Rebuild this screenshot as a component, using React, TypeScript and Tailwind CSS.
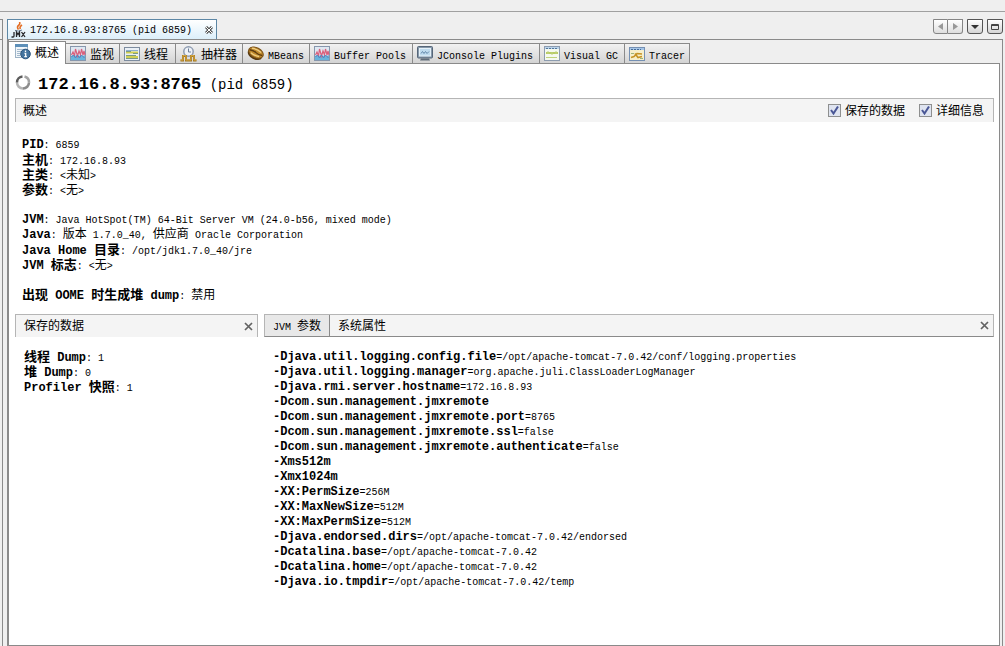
import { useState } from "react";
import type { ReactNode } from "react";

const MONO = "font-['Liberation_Mono','Noto_Sans_CJK_SC',monospace]";
const CJK = /([\u4e00-\u9fff]+)/;

// Chinese runs are set a little larger than the latin ones beside them
const Mixed = ({ text, bold = false }: { text: string; bold?: boolean }) => (
  <>
    {text.split(CJK).map((part, i) =>
      CJK.test(part) ? (
        <span key={i} className={bold ? "text-[13px]" : "text-[12px]"}>
          {part}
        </span>
      ) : (
        part
      )
    )}
  </>
);

const Field = ({ name, value, separator = ": " }: { name: string; value?: string; separator?: string }) => (
  <div className="h-[15px] whitespace-pre">
    <b className="text-[12px]">
      <Mixed text={name} bold />
    </b>
    {value !== undefined && <Mixed text={separator + value} />}
  </div>
);

const InfoIcon = () => (
  <svg width="16" height="16" viewBox="0 0 16 16">
    <rect x="0.5" y="0.5" width="12" height="13" fill="#f1f6fa" stroke="#9db3c6" />
    <rect x="0" y="0" width="13" height="3" fill="#5d8fb8" />
    <path d="M2 5.500h9M2 7.500h4M2 9.500h3M2 11.500h3" stroke="#a3b9cc" />
    <circle cx="10.500" cy="10" r="4.800" fill="#44749f" stroke="#2b547c" />
    <path d="M10.500 6.500v1.500M9.500 9.500h1.200v3M9.300 12.700h2.600" stroke="#fff" strokeWidth="1.300" fill="none" />
  </svg>
);

const MonitorIcon = () => (
  <svg width="16" height="15" viewBox="0 0 16 15">
    <rect x="0.5" y="0.5" width="15" height="14" fill="#dfe8f2" stroke="#8797ad" />
    <path d="M1 14v-4l2-1 2 1 2-1 2 1 2-1 2 1 2-1v5z" fill="#68b4dc" />
    <path d="M1.500 9l1.500-3 1.500 4 1-7 2 7 1.500-5 1.500 4 1-6 1.500 6 1-4 1 4" stroke="#d9607c" strokeWidth="1.200" fill="none" />
    <path d="M1.500 11l2-2 2 3 2-3 2 3 2-3 3 3" stroke="#5582bd" fill="none" />
  </svg>
);

const ThreadsIcon = () => (
  <svg width="16" height="14" viewBox="0 0 16 14">
    <rect x="0.5" y="0.5" width="15" height="13" fill="#eaf0f6" stroke="#7d8c9f" />
    <path d="M2 3.500h12" stroke="#8eaed0" />
    <path d="M2 5.500h12M2 10h12" stroke="#d0cf52" strokeWidth="2" />
    <path d="M2 4.500h5M9 6.500h5M2 8.500h10M2 11.500h12" stroke="#7b9a86" />
  </svg>
);

const SamplerIcon = () => (
  <svg width="17" height="16" viewBox="0 0 17 16" fill="none">
    <circle cx="8.500" cy="5.500" r="4.700" fill="#eef2f7" stroke="#8e9bb0" strokeWidth="1.500" />
    <path d="M8.500 2.500v3.500h2.500" stroke="#6c7f98" />
    <path d="M.500 14.500H3V10h3v4.500h5V10h3v4.500h2.500" stroke="#a67a20" strokeWidth="2" />
    <path d="M.500 14H3V9.500h3V14h5V9.500h3V14h2.500" stroke="#d3a440" />
  </svg>
);

const BeanIcon = () => (
  <svg width="17" height="15" viewBox="0 0 17 15">
    <g transform="rotate(28 8.500 7.500)">
      <ellipse cx="8.500" cy="8.500" rx="7.800" ry="5" fill="#55380f" />
      <ellipse cx="8.500" cy="6.500" rx="7.800" ry="5" fill="#c08a2c" stroke="#7c5218" />
      <path d="M1.500 7q4-1.500 7-.500t7-.500" stroke="#5d3c10" strokeWidth="1.400" fill="none" />
      <path d="M3 4.500q5-2 10-.500M4 9q5 1 9-.500" stroke="#efcf85" strokeWidth="1.300" fill="none" />
    </g>
  </svg>
);

const ConsoleIcon = () => (
  <svg width="16" height="15" viewBox="0 0 16 15">
    <rect x="0.5" y="0.5" width="15" height="11.500" rx="1" fill="#8698aa" stroke="#566678" />
    <rect x="2.500" y="2.500" width="11" height="7.500" fill="#bfdbee" stroke="#e4f0f8" />
    <path d="M4 7.500l1.500-2 1.500 2 1.500-2 1.500 2 2-2" stroke="#6288aa" fill="none" />
    <path d="M4 12.500h8l1 2H3z" fill="#606c79" />
  </svg>
);

const GcIcon = () => (
  <svg width="16" height="15" viewBox="0 0 16 15">
    <rect x="0.5" y="0.5" width="15" height="14" fill="#f5f9ef" stroke="#8d9caf" />
    <path d="M1 2h14" stroke="#b9d3eb" strokeWidth="2" />
    <path d="M2 2.500h12" stroke="#54779b" strokeDasharray="2 1" />
    <path d="M2 7h12" stroke="#a3bd36" strokeWidth="1.500" />
    <path d="M4 5v3M8 6v3M12 5v3M2 11.500h11" stroke="#bfd27c" />
  </svg>
);

const TracerIcon = () => (
  <svg width="16" height="14" viewBox="0 0 16 14">
    <rect x="0.5" y="0.5" width="15" height="13" fill="#f6efcb" stroke="#7590b3" />
    <path d="M1 2h14" stroke="#a6c6e8" strokeWidth="2" />
    <path d="M2 2.500h10" stroke="#466c98" strokeDasharray="2 1" />
    <path d="M2 10.500l3-1 3-3 5 .500M6 6.500l3 4 4-1" stroke="#c59325" strokeWidth="1.600" fill="none" />
    <path d="M2 6.500h3M11 11.500h3" stroke="#9cb37b" />
  </svg>
);

const JmxIcon = () => (
  <svg width="15" height="16" viewBox="0 0 15 16" fill="none">
    <path d="M8.500 0q1 2-1 3.500t0 4M11 3Q8 5 9.500 7" stroke="#e46d22" strokeWidth="1.600" />
    <path d="M4 8.500q4 1.500 7-.500" stroke="#68809a" />
    <path d="M3 10v4q0 1-1 1H.500M5.500 15v-5l1.500 2.500L8.500 10v5M10.500 10l3.500 5M14 10l-3.500 5" stroke="#27282c" strokeWidth="1.300" />
  </svg>
);

const SpinnerIcon = () => (
  <svg width="16" height="17" viewBox="0 0 16 17" fill="none" strokeWidth="2.500">
    <path d="M9.500 2.500A6 6 0 0 1 14 8.500" stroke="#a3a3a3" />
    <path d="M14 8.500A6 6 0 0 1 8 14.500" stroke="#8c8c8c" />
    <path d="M8 14.500A6 6 0 0 1 2 8.500" stroke="#b4b4b4" />
    <path d="M2 8.500A6 6 0 0 1 7.500 2.500" stroke="#5c5c5c" />
  </svg>
);

const CloseIcon = () => (
  <svg width="9" height="9" viewBox="0 0 9 9">
    <path d="M1 1l7 7M8 1L1 8" stroke="#626262" strokeWidth="1.700" />
  </svg>
);

const tabs: { label: string; icon: ReactNode; width: string }[] = [
  { label: "概述", icon: <InfoIcon />, width: "w-[57px]" },
  { label: "监视", icon: <MonitorIcon />, width: "w-[54px]" },
  { label: "线程", icon: <ThreadsIcon />, width: "w-[56px]" },
  { label: "抽样器", icon: <SamplerIcon />, width: "w-[67px]" },
  { label: "MBeans", icon: <BeanIcon />, width: "w-[67px]" },
  { label: "Buffer Pools", icon: <MonitorIcon />, width: "w-[103px]" },
  { label: "JConsole Plugins", icon: <ConsoleIcon />, width: "w-[127px]" },
  { label: "Visual GC", icon: <GcIcon />, width: "w-[85px]" },
  { label: "Tracer", icon: <TracerIcon />, width: "w-[65px]" },
];

const overview: ([string, string] | null)[] = [
  ["PID", "6859"],
  ["主机", "172.16.8.93"],
  ["主类", "<未知>"],
  ["参数", "<无>"],
  null,
  ["JVM", "Java HotSpot(TM) 64-Bit Server VM (24.0-b56, mixed mode)"],
  ["Java", "版本 1.7.0_40, 供应商 Oracle Corporation"],
  ["Java Home 目录", "/opt/jdk1.7.0_40/jre"],
  ["JVM 标志", "<无>"],
  null,
  ["出现 OOME 时生成堆 dump", "禁用"],
];

const saved: [string, string][] = [
  ["线程 Dump", "1"],
  ["堆 Dump", "0"],
  ["Profiler 快照", "1"],
];

const jvmArgs: [string, string?][] = [
  ["-Djava.util.logging.config.file", "/opt/apache-tomcat-7.0.42/conf/logging.properties"],
  ["-Djava.util.logging.manager", "org.apache.juli.ClassLoaderLogManager"],
  ["-Djava.rmi.server.hostname", "172.16.8.93"],
  ["-Dcom.sun.management.jmxremote"],
  ["-Dcom.sun.management.jmxremote.port", "8765"],
  ["-Dcom.sun.management.jmxremote.ssl", "false"],
  ["-Dcom.sun.management.jmxremote.authenticate", "false"],
  ["-Xms512m"],
  ["-Xmx1024m"],
  ["-XX:PermSize", "256M"],
  ["-XX:MaxNewSize", "512M"],
  ["-XX:MaxPermSize", "512M"],
  ["-Djava.endorsed.dirs", "/opt/apache-tomcat-7.0.42/endorsed"],
  ["-Dcatalina.base", "/opt/apache-tomcat-7.0.42"],
  ["-Dcatalina.home", "/opt/apache-tomcat-7.0.42"],
  ["-Djava.io.tmpdir", "/opt/apache-tomcat-7.0.42/temp"],
];

const Toggle = ({ id, label }: { id: string; label: string }) => {
  const [checked, setChecked] = useState(true);

  return (
    <div className="flex items-center gap-1">
      <span className="grid place-items-center">
        <input
          id={id}
          type="checkbox"
          checked={checked}
          onChange={(e) => setChecked(e.target.checked)}
          className="col-start-1 row-start-1 appearance-none w-[13px] h-[13px] border border-[#8e8f8f] bg-[#dfe4f0]"
        />
        {checked && (
          <svg width="9" height="9" viewBox="0 0 9 9" className="col-start-1 row-start-1 pointer-events-none">
            <path d="M1 4l2.500 3.500L8 .500" stroke="#4a5796" strokeWidth="2" fill="none" />
          </svg>
        )}
      </span>
      <label htmlFor={id} className="pt-1 text-[12px]">
        {label}
      </label>
    </div>
  );
};

const cornerButton = "flex items-center justify-center h-[15px] border border-[#555] rounded-b-[3px] bg-linear-to-b from-white to-[#d5d5d5]";

const App: React.FC = () => {
  const [active, setActive] = useState("概述");
  const [detail, setDetail] = useState("JVM 参数");

  return (
    <div className={`${MONO} flex flex-col min-h-screen bg-[#efefef] text-[10px] leading-[15px] text-black`}>
      <div className="h-3 border-b border-[#a0a0a0]" />

      <div className="flex flex-1 pt-[7px]">
        <div className="w-[3px] mr-1 border-t border-r border-[#8a8a8a]">
          <div className="h-5 border-b border-[#8a8a8a]" />
        </div>

        <div className="flex flex-col flex-1 min-w-0 mr-[2px]">
          <div className="flex items-end justify-between h-5">
            <div className="flex items-center h-5 w-[210px] pl-[3px] pr-[3px] border border-b-0 border-[#5d87a5] bg-linear-to-b from-white to-[#dceffa]">
              <JmxIcon />
              <span className="ml-1 pt-[2px] whitespace-nowrap">172.16.8.93:8765 (pid 6859)</span>
              <button type="button" aria-label="Close window" className="ml-auto">
                <svg width="8" height="8" viewBox="0 0 8 8" fill="none">
                  <path d="M1 1l6 6M7 1L1 7" stroke="#555" strokeWidth="3" />
                  <path d="M1 1l6 6M7 1L1 7" stroke="#fff" />
                </svg>
              </button>
            </div>

            <div className="flex gap-1 self-start">
              <div className="flex">
                <button type="button" aria-label="Previous" className="flex items-center justify-center w-[15px] h-[15px] border border-[#858585] rounded-bl-[3px] bg-linear-to-b from-white to-[#dedede]">
                  <svg width="5" height="7" viewBox="0 0 5 7"><path d="M5 0v7L0 3.500z" fill="#999" /></svg>
                </button>
                <button type="button" aria-label="Next" className="flex items-center justify-center w-[15px] h-[15px] border border-l-0 border-[#858585] rounded-br-[3px] bg-linear-to-b from-white to-[#dedede]">
                  <svg width="5" height="7" viewBox="0 0 5 7"><path d="M0 0v7l5-3.500z" fill="#999" /></svg>
                </button>
              </div>
              <button type="button" aria-label="Window list" className={`${cornerButton} w-4`}>
                <svg width="8" height="4" viewBox="0 0 8 4"><path d="M0 0h8L4 4z" fill="#333" /></svg>
              </button>
              <button type="button" aria-label="Maximize" className={`${cornerButton} w-4`}>
                <svg width="8" height="6" viewBox="0 0 8 6"><path d="M.500 .500h7v5h-7zM0 1.500h8" stroke="#444" fill="none" /></svg>
              </button>
            </div>
          </div>

          <main className="flex flex-col flex-1 pt-px pr-[2px] border-t border-x border-l-2 border-[#8a8a8a]">
            <div role="tablist" className="flex items-end h-[23px] shadow-[inset_0_-1px_0_#8a8a8a]">
              {tabs.map((tab) => (
                <button
                  key={tab.label}
                  type="button"
                  role="tab"
                  aria-selected={active === tab.label}
                  onClick={() => setActive(tab.label)}
                  className={`${tab.width} flex items-center gap-1 border-t border-r border-[#8a8a8a] whitespace-nowrap ${
                    active === tab.label
                      ? "h-[23px] bg-white pl-[6px] pb-[2px]"
                      : "h-[21px] border-b pl-1 bg-linear-to-b from-[#f2f2f2] to-[#d4d4d4]"
                  }`}
                >
                  <span className="shrink-0">{tab.icon}</span>
                  <span className="pt-[5px]">
                    <Mixed text={tab.label} />
                  </span>
                </button>
              ))}
            </div>

            <div className="flex flex-col flex-1 pl-[6px] pr-[5px] bg-white border-r border-b border-[#8a8a8a]">
              <div className="flex items-center gap-[7px] h-[34px] pt-2">
                <span className="mb-[6px]">
                  <SpinnerIcon />
                </span>
                <h1 className="text-[14px] leading-5 whitespace-pre">
                  <b className="text-[17px]">172.16.8.93:8765</b> (pid 6859)
                </h1>
              </div>

              <section>
                <div className="flex items-center h-6 pl-[7px] pr-[9px] bg-[#f4f4f4] border border-b-0 border-[#b5b5b5]">
                  <h2 className="pt-1 text-[12px]">概述</h2>
                  <div className="flex gap-[14px] ml-auto">
                    <Toggle id="saved-data" label="保存的数据" />
                    <Toggle id="details" label="详细信息" />
                  </div>
                </div>
                <div className="h-[192px] pl-[7px] pt-4">
                  {overview.map((row, i) =>
                    row ? <Field key={i} name={row[0]} value={row[1]} /> : <div key={i} className="h-[15px]" />
                  )}
                </div>
              </section>

              <div className="flex flex-1 gap-[6px]">
                <section className="w-[243px] shrink-0">
                  <div className="flex items-center justify-between h-[23px] pl-2 pr-1 bg-[#f4f4f4] border border-b-0 border-[#b5b5b5]">
                    <h2 className="pt-[3px] text-[12px]">保存的数据</h2>
                    <button type="button" aria-label="Close saved data">
                      <CloseIcon />
                    </button>
                  </div>
                  <div className="pl-[9px] pt-[13px]">
                    {saved.map(([name, value]) => (
                      <Field key={name} name={name} value={value} />
                    ))}
                  </div>
                </section>

                <section className="flex-1 min-w-0">
                  <div className="flex h-[23px] bg-[#f4f4f4] border border-[#b5b5b5] border-b-[#8a8a8a]">
                    <div role="tablist" className="flex">
                      {["JVM 参数", "系统属性"].map((label) => (
                        <button
                          key={label}
                          type="button"
                          role="tab"
                          aria-selected={detail === label}
                          onClick={() => setDetail(label)}
                          className={`px-2 pt-[3px] whitespace-nowrap ${detail === label ? "bg-[#e8e8e8] border-r border-[#8a8a8a]" : ""}`}
                        >
                          <Mixed text={label} />
                        </button>
                      ))}
                    </div>
                    <button type="button" aria-label="Close details" className="ml-auto pr-1">
                      <CloseIcon />
                    </button>
                  </div>
                  <div className="pl-[9px] pt-[13px]">
                    {jvmArgs.map(([name, value]) => (
                      <Field key={name} name={name} value={value} separator="=" />
                    ))}
                  </div>
                </section>
              </div>
            </div>
          </main>
        </div>
      </div>
    </div>
  );
};

export default App;
